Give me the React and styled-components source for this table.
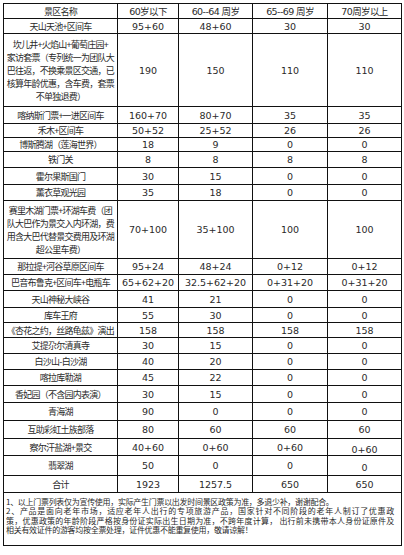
import styled, { createGlobalStyle } from "styled-components"

const GlobalStyle=createGlobalStyle`
body{
  margin:0;
  background:#fff;
}
`

const Page=styled.div`
padding:3px;
width:399px;
`
const Table=styled.div`
border-top:1px solid #111;
border-left:1px solid #111;
display:flex;
flex-direction:column;
`
const Row=styled.div`
display:grid;
grid-template-columns:114px 61px 74px 75px 74px;
height:${p=>p.$h}px;
`
const Cell=styled.div`
box-sizing:border-box;
border-right:1px solid #111;
border-bottom:1px solid #111;
display:flex;
align-items:center;
justify-content:center;
text-align:center;
color:#2a2a2a;
white-space:nowrap;
padding-top:${p=>p.$drop||0}px;
`
const Name=styled(Cell)`
font-family:"Noto Sans CJK SC","Noto Sans",sans-serif;
font-size:9px;
letter-spacing:-0.75px;
line-height:13px;
`
const Num=styled(Cell)`
font-family:"DejaVu Sans","Noto Sans CJK SC",sans-serif;
font-size:9.5px;
letter-spacing:${p=>p.$head?"-0.6px":"0"};
`
const Notes=styled.div`
box-sizing:border-box;
height:53px;
border:1px solid #111;
border-top:none;
padding:4px 7px 0 2px;
font-family:"Noto Sans CJK SC","Noto Sans",sans-serif;
font-size:8px;
line-height:9.3px;
color:#2a2a2a;
letter-spacing:-0.3px;
`
const NoteLine=styled.div`
white-space:nowrap;
height:9.3px;
text-align:${p=>p.$full?"justify":"left"};
text-align-last:${p=>p.$full?"justify":"auto"};
`

const rows=[
  {h:15,name:"天山天池+区间车",v:["95+60","48+60","30","30"]},
  {h:73,name:["坎儿井+火焰山+葡萄庄园+","家访套票（专列统一为团队大","巴往返，不换乘景区交通，已","核算年龄优惠，含车费，套票","不单独退费）"],v:["190","150","110","110"]},
  {h:17,name:"喀纳斯门票+一进区间车",v:["160+70","80+70","35","35"]},
  {h:14,name:"禾木+区间车",v:["50+52","25+52","26","26"]},
  {h:14,name:"博斯腾湖（莲海世界）",v:["18","9","0","0"]},
  {h:16,name:"铁门关",v:["8","8","8","8"]},
  {h:17,name:"霍尔果斯国门",v:["30","15","0","0"]},
  {h:16,name:"薰衣草观光园",v:["35","18","0","0"]},
  {h:58,name:["赛里木湖门票+环湖车费（团","队大巴作为景交入内环湖，费","用含大巴代替景交费用及环湖","超公里车费）"],v:["70+100","35+100","100","100"]},
  {h:16,name:"那拉提+河谷草原区间车",v:["95+24","48+24","0+12","0+12"]},
  {h:16,name:"巴音布鲁克+区间车+电瓶车",v:["65+62+20","32.5+62+20","0+31+20","0+31+20"]},
  {h:17,name:"天山神秘大峡谷",v:["41","21","0","0"]},
  {h:15,name:"库车王府",v:["55","30","0","0"]},
  {h:15,name:"《杏花之约，丝路龟兹》演出",v:["158","158","158","158"]},
  {h:16,name:"艾提尕尔清真寺",v:["30","15","0","0"]},
  {h:16,name:"白沙山-白沙湖",v:["40","20","0","0"]},
  {h:16,name:"喀拉库勒湖",v:["45","22","0","0"]},
  {h:17,name:"香妃园（不含园内表演）",v:["30","15","0","0"]},
  {h:18,name:"青海湖",v:["90","0","0","0"]},
  {h:18,name:"互助彩虹土族部落",v:["80","60","60","60"]},
  {h:17,name:"察尔汗盐湖+景交",v:["40+60","0+60","0+60","0+60"],drop:5},
  {h:20,name:"翡翠湖",v:["50","0","0","0"],drop:4},
  {h:17,name:"合计",v:["1923","1257.5","650","650"]},
]

const App=()=>{
  return <Page>
    <GlobalStyle/>
    <Table>
      <Row $h={15}>
        <Name>景区名称</Name>
        <Num $head>60岁以下</Num>
        <Num $head>60--64 周岁</Num>
        <Num $head>65--69 周岁</Num>
        <Num $head>70周岁以上</Num>
      </Row>
      {rows.map((r,i)=>(
        <Row key={i} $h={r.h}>
          <Name>
            {Array.isArray(r.name)?<div>{r.name.map((l,j)=><div key={j}>{l}</div>)}</div>:r.name}
          </Name>
          {r.v.map((v,j)=>(
            <Num key={j} $drop={j===3?r.drop:0}>{v}</Num>
          ))}
        </Row>
      ))}
    </Table>
    <Notes>
      <NoteLine>1、以上门票列表仅为宣传使用，实际产生门票以出发时间景区政策为准，多退少补，谢谢配合。</NoteLine>
      <NoteLine $full>2、产品是面向老年市场，适应老年人出行的专项旅游产品，国家针对不同阶段的老年人制订了优惠政</NoteLine>
      <NoteLine $full>策，优惠政策的年龄阶段严格按身份证实际出生日期为准，不跨年度计算， 出行前未携带本人身份证原件及</NoteLine>
      <NoteLine>相关有效证件的游客均按全票处理，证件优惠不能重复使用，敬请谅解！</NoteLine>
    </Notes>
  </Page>
}
export default App
